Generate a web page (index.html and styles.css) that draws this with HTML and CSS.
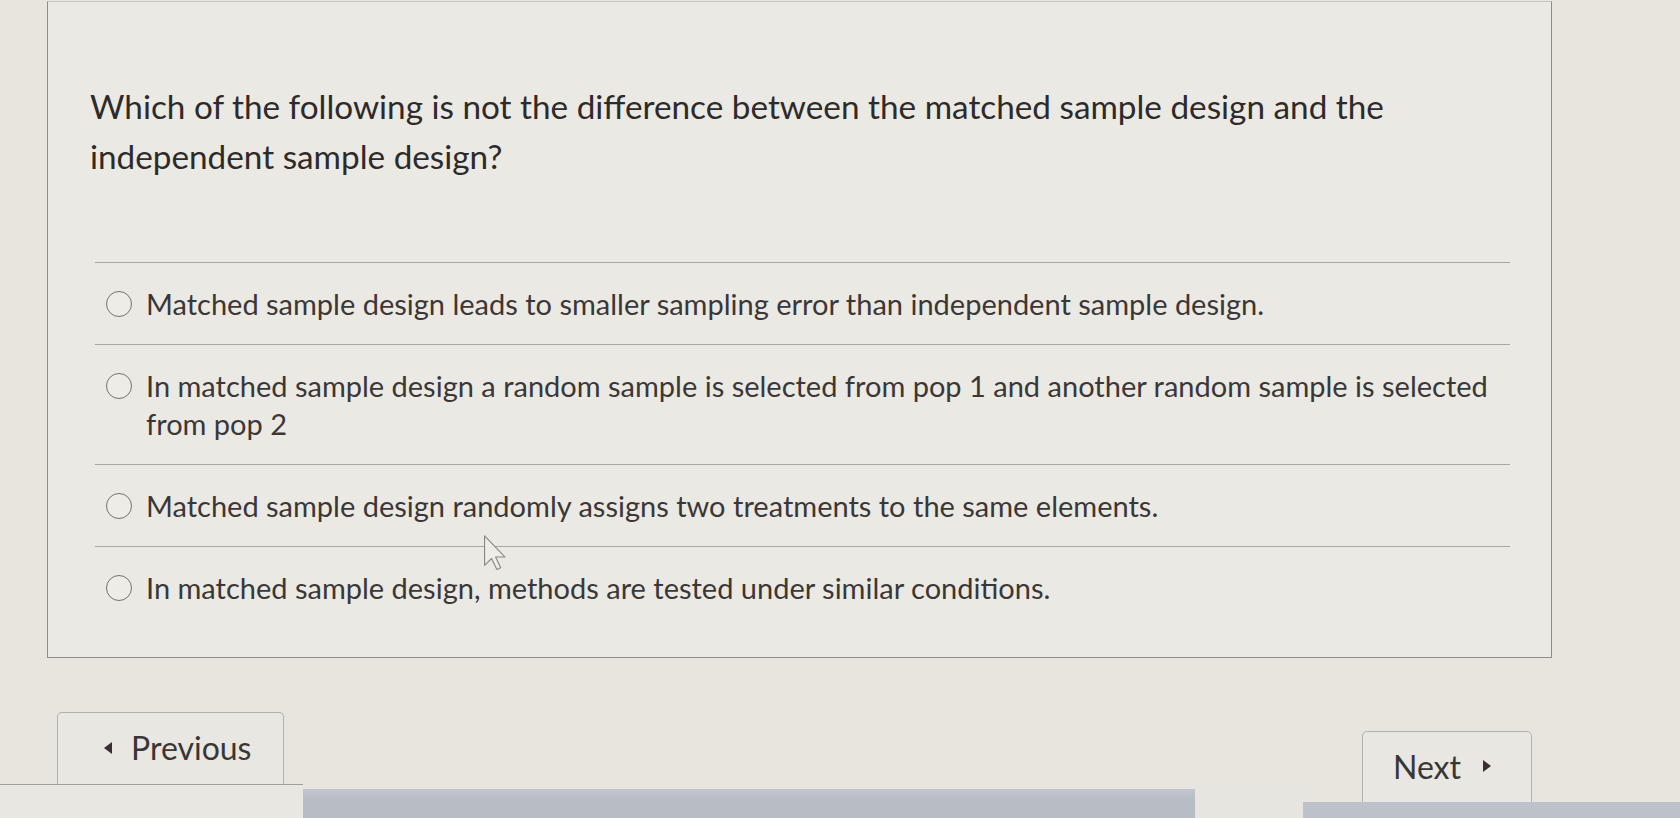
FILE: index.html
```html
<!DOCTYPE html>
<html lang="en">
<head>
<meta charset="utf-8">
<title>Question</title>
<link rel="stylesheet" href="styles.css">
</head>
<body>
<div class="page">
  <section class="card">
    <p class="question">Which of the following is not the difference between the matched sample design and the independent sample design?</p>
    <ul class="options">
      <li class="option"><span class="radio"></span><span class="label">Matched sample design leads to smaller sampling error than independent sample design.</span></li>
      <li class="option"><span class="radio"></span><span class="label">In matched sample design a random sample is selected from pop 1 and another random sample is selected from pop 2</span></li>
      <li class="option"><span class="radio"></span><span class="label">Matched sample design randomly assigns two treatments to the same elements.</span></li>
      <li class="option"><span class="radio"></span><span class="label">In matched sample design, methods are tested under similar conditions.</span></li>
    </ul>
  </section>
  <nav class="nav">
    <button class="btn btn-prev"><span class="tri tri-left"></span>Previous</button>
    <button class="btn btn-next">Next<span class="tri tri-right"></span></button>
  </nav>
  <div class="taskbar">
    <div class="seg seg-left"></div>
    <div class="seg seg-mid"></div>
    <div class="seg seg-gap"></div>
    <div class="seg seg-right"></div>
  </div>
  <svg class="cursor" width="24" height="36" viewBox="0 0 12 19" aria-hidden="true">
    <path d="M0.5 0.5 L0.5 16 L4.2 12.4 L7 18.2 L9 17.3 L6.3 11.6 L11.2 11.6 Z" fill="#efede8" stroke="#8c8882" stroke-width="0.6" stroke-linejoin="round"/>
  </svg>
</div>
</body>
</html>
```

FILE: styles.css
```css
* { box-sizing: border-box; }

html, body {
  margin: 0;
  padding: 0;
  background: #e7e5de;
}

body {
  font-family: Lato, "Open Sans", "Liberation Sans", sans-serif;
  color: #3c3838;
}

.page {
  position: relative;
  width: 1680px;
  height: 818px;
  overflow: hidden;
  display: flex;
  flex-direction: column;
}

.card {
  margin: 1px 128px 0 47px;
  height: 657px;
  background: #ebe9e3;
  border: 1.5px solid #8f8b86;
  border-top-color: #c9c5bf;
  padding: 79px 41px 0 42px;
}

.question {
  margin: 0;
  max-width: 1345px;
  font-size: 33.3px;
  line-height: 50px;
  color: #2e2a2a;
}

.options {
  list-style: none;
  margin: 81px 0 0 5px;
  padding: 0;
}

.option {
  display: flex;
  align-items: flex-start;
  gap: 14px;
  border-top: 1.5px solid #aaa6a0;
  padding: 22px 10px 21px 11px;
}

.radio {
  flex: none;
  width: 26px;
  height: 26px;
  margin-top: 6px;
  border-radius: 50%;
  border: 1.5px solid #75716d;
  background: #eeece7;
}

.label {
  font-size: 29px;
  line-height: 38px;
  color: #3b3737;
}

.nav {
  flex: none;
  height: 126px;
  display: flex;
  justify-content: space-between;
  align-items: flex-start;
  padding: 0 148px 0 57px;
}

.btn {
  display: flex;
  align-items: center;
  height: 72px;
  font-family: inherit;
  font-size: 32px;
  color: #3a3636;
  background: #e9e7e1;
  border: 1.5px solid #b3afa9;
  border-radius: 5px 5px 0 0;
  cursor: pointer;
}

.btn-prev {
  width: 227px;
  margin-top: 54px;
  padding: 0 0 2px 46px;
  gap: 19px;
  border-bottom: none;
}

.btn-next {
  width: 170px;
  margin-top: 73px;
  padding: 0 0 2px 30px;
  gap: 22px;
}

.tri {
  display: inline-block;
  width: 0;
  height: 0;
  border-top: 6px solid transparent;
  border-bottom: 6px solid transparent;
}

.tri-left { border-right: 8px solid #3a2f30; }
.tri-right { border-left: 8px solid #3a2f30; }

.taskbar {
  flex: 1;
  display: flex;
  align-items: stretch;
}

.seg-left {
  width: 303px;
  background: #e9e7e1;
  border-top: 1.5px solid #a29e98;
}

.seg-mid {
  width: 892px;
  margin-top: 5px;
  background: linear-gradient(#c3c6cc, #b8bcc5 40%);
}

.seg-gap {
  width: 108px;
  background: #e7e5df;
}

.seg-right {
  flex: 1;
  margin-top: 18px;
  background: #bdc1c9;
}

.cursor {
  position: absolute;
  left: 483px;
  top: 535px;
}
```
